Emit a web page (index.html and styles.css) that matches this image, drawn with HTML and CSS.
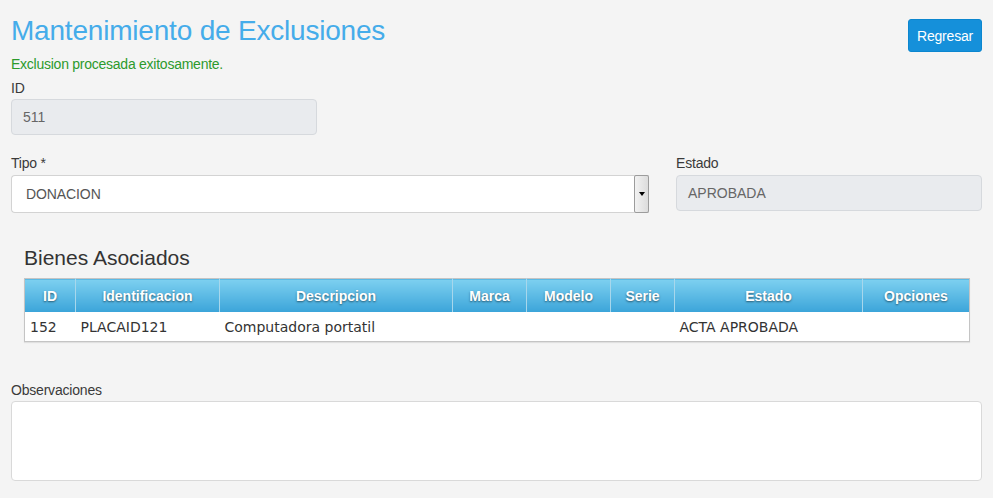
FILE: index.html
```html
<!DOCTYPE html>
<html lang="es">
<head>
<meta charset="utf-8">
<title>Mantenimiento de Exclusiones</title>
<link rel="stylesheet" href="styles.css">
</head>
<body>
<div class="page">
  <div class="header">
    <h1 class="title">Mantenimiento de Exclusiones</h1>
    <button class="btn-back" type="button">Regresar</button>
  </div>
  <p class="msg-success">Exclusion procesada exitosamente.</p>

  <div class="field field-id">
    <label class="label">ID</label>
    <div class="input input-disabled">511</div>
  </div>

  <div class="row-two">
    <div class="field">
      <label class="label">Tipo *</label>
      <div class="select">
        <span class="select-value">DONACION</span>
        <span class="select-btn">
          <svg width="6" height="4" viewBox="0 0 6 4"><path d="M0 0H6L3 4Z" fill="#000"/></svg>
        </span>
      </div>
    </div>
    <div class="field">
      <label class="label">Estado</label>
      <div class="input input-disabled">APROBADA</div>
    </div>
  </div>

  <section class="assets">
    <h2 class="assets-title">Bienes Asociados</h2>
    <table class="grid">
      <colgroup>
        <col class="c-id"><col class="c-ident"><col class="c-desc"><col class="c-marca">
        <col class="c-modelo"><col class="c-serie"><col class="c-estado"><col class="c-opc">
      </colgroup>
      <thead>
        <tr>
          <th>ID</th><th>Identificacion</th><th>Descripcion</th><th>Marca</th>
          <th>Modelo</th><th>Serie</th><th>Estado</th><th>Opciones</th>
        </tr>
      </thead>
      <tbody>
        <tr>
          <td>152</td><td>PLACAID121</td><td>Computadora portatil</td><td></td>
          <td></td><td></td><td>ACTA APROBADA</td><td></td>
        </tr>
      </tbody>
    </table>
  </section>

  <div class="field field-obs">
    <label class="label">Observaciones</label>
    <textarea class="textarea"></textarea>
  </div>
</div>
</body>
</html>
```
FILE: styles.css
```css
html, body {
  margin: 0;
  background: #f4f4f4;
}
body {
  font-family: "Liberation Sans", Arial, sans-serif;
  color: #333;
}
.page {
  padding: 13px 11px 0 11px;
}
.header {
  display: flex;
  justify-content: space-between;
  align-items: flex-start;
}
.title {
  margin: 0;
  font-size: 28px;
  line-height: 36px;
  font-weight: normal;
  color: #45acea;
  letter-spacing: -0.2px;
}
.btn-back {
  margin-top: 6px;
  height: 33px;
  width: 74px;
  padding: 0;
  border: 1px solid #0b86cf;
  border-radius: 3px;
  background: #1590da;
  color: #fff;
  font-family: "Liberation Sans", Arial, sans-serif;
  font-size: 14px;
  letter-spacing: -0.2px;
}
.msg-success {
  margin: 2px 0 4px;
  font-size: 14px;
  line-height: 20px;
  color: #2c9a2c;
  letter-spacing: -0.25px;
}
.field {
  display: flex;
  flex-direction: column;
}
.label {
  font-size: 14px;
  line-height: 20px;
  color: #3a3a3a;
  margin-bottom: 1px;
  letter-spacing: -0.2px;
}
.field-id {
  width: 306px;
}
.input {
  box-sizing: border-box;
  height: 36px;
  border: 1px solid #d6d9dd;
  border-radius: 4px;
  padding: 0 11px;
  display: flex;
  align-items: center;
  font-size: 14px;
  color: #666;
}
.input-disabled {
  background: #e9ebee;
}
.row-two {
  margin-top: 18px;
  display: grid;
  grid-template-columns: 638px 306px;
  column-gap: 27px;
  align-items: start;
}
.row-two .label {
  margin-bottom: 2px;
}
.select {
  box-sizing: border-box;
  height: 38px;
  border: 1px solid #d3d3d3;
  border-right: none;
  border-radius: 4px 0 0 4px;
  background: #fff;
  display: flex;
  align-items: stretch;
}
.select-value {
  flex: 1;
  display: flex;
  align-items: center;
  padding-left: 14px;
  font-size: 14px;
  color: #555;
  letter-spacing: -0.1px;
}
.select-btn {
  box-sizing: border-box;
  width: 15px;
  margin: -1px 0;
  border: 1px solid #9c9c9c;
  border-radius: 2px;
  background: linear-gradient(to right, #f2f2f2, #dcdcdc);
  display: flex;
  align-items: center;
  justify-content: center;
}
.assets {
  margin-top: 32px;
  padding: 0 13px;
}
.assets-title {
  margin: 0 0 7px;
  font-size: 21px;
  line-height: 26px;
  font-weight: normal;
  color: #333;
}
.grid {
  width: 100%;
  table-layout: fixed;
  border-collapse: collapse;
  border: 1px solid #c4c4c4;
  box-shadow: 0 1px 1px rgba(0,0,0,0.08);
}
.c-id { width: 51px; }
.c-ident { width: 144px; }
.c-desc { width: 233px; }
.c-marca { width: 74px; }
.c-modelo { width: 84px; }
.c-serie { width: 64px; }
.c-estado { width: 188px; }
.c-opc { width: 107px; }
.grid th {
  height: 33px;
  padding: 0;
  background: linear-gradient(to bottom, #7dd0f0, #3ba4d9);
  border-left: 1px solid #a7d7ec;
  color: #fff;
  font-family: "Liberation Sans", Arial, sans-serif;
  font-size: 14px;
  font-weight: bold;
  text-align: center;
  text-shadow: 0 1px 2px rgba(0,0,0,0.5);
}
.grid th:first-child {
  border-left: none;
}
.grid td {
  height: 28px;
  padding: 1px 5px 0;
  background: #fff;
  font-family: "DejaVu Sans", Verdana, sans-serif;
  font-size: 14px;
  color: #333;
  white-space: nowrap;
}
.field-obs {
  margin-top: 38px;
}
.textarea {
  box-sizing: border-box;
  height: 80px;
  width: 100%;
  border: 1px solid #d9d9d9;
  border-radius: 4px;
  background: #fff;
  resize: none;
  display: block;
  margin: 0;
}
```
